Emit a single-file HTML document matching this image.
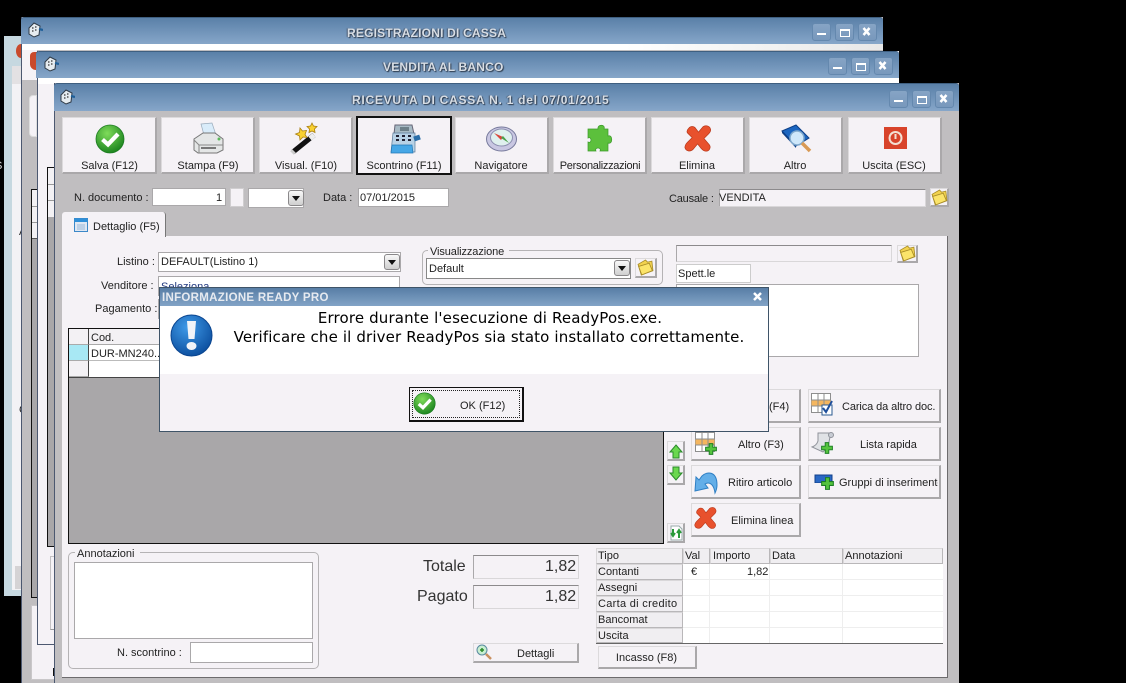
<!DOCTYPE html>
<html><head><meta charset="utf-8"><style>
html,body{margin:0;padding:0;background:#000;width:1126px;height:683px;overflow:hidden}
#r{position:relative;width:1126px;height:683px;overflow:hidden;font:11px "Liberation Sans",sans-serif;color:#222}
#r div,#r svg{position:absolute}
.t{white-space:nowrap;line-height:14px;margin-top:1px}
.tb{background:linear-gradient(#5a80a8,#86a6c9);border-top:1px solid #3f5f80;box-sizing:border-box;border-radius:3px 3px 0 0}
.tt{white-space:nowrap;font-weight:bold;font-size:12px;color:#d8dee5;text-shadow:1px 1px 1px #2c3a4c,-1px 0 1px #4a5a70;line-height:14px}
.wb{width:19px;height:18px;box-sizing:border-box;border:1px solid #6488ae;border-radius:3px;background:linear-gradient(#86a4c5,#7898bc)}
.btn{box-sizing:border-box;background:#f5f2f6;border:1px solid #dcdadc;border-right:2px solid #aaa8aa;border-bottom:2px solid #aaa8aa;box-shadow:none}
.foc{border:2px solid #111;box-shadow:none}
.inp{box-sizing:border-box;background:#fff;border:1px solid #aaa8aa}
.dis{box-sizing:border-box;background:#f5f2f6;border:1px solid #aaa8aa;border-top-color:#8c8a8c;border-bottom-color:#d9d7d9;border-right-color:#d9d7d9}
.arr{width:16px;height:16px;box-sizing:border-box;border:1px solid #8a888a;border-radius:3px;background:linear-gradient(#f8f8f8,#cfcfcf)}
.arr:after{content:"";position:absolute;left:3px;top:5px;border:4px solid transparent;border-top:5px solid #111;border-bottom:0}
.c{text-align:center}
.g{box-sizing:border-box;border:1px solid #b5b3b5;border-radius:5px}
.h{box-sizing:border-box;background:#f0eef1;border:1px solid #d9d7d9;border-right-color:#b9b7b9;border-bottom-color:#b9b7b9}
</style></head><body><div id="r">

<svg width="0" height="0" style="left:0;top:0">
<defs>
<radialGradient id="gg" cx="40%" cy="30%" r="75%"><stop offset="0" stop-color="#7fdc5a"/><stop offset="1" stop-color="#17801c"/></radialGradient>
<radialGradient id="bb" cx="40%" cy="30%" r="75%"><stop offset="0" stop-color="#3f9ae8"/><stop offset="1" stop-color="#0a4c9c"/></radialGradient>
<symbol id="ok" viewBox="0 0 30 30"><circle cx="15" cy="15" r="14" fill="url(#gg)" stroke="#1b7a20" stroke-width=".8"/><path d="M7.5 15.5l5.5 5 10-10.5" fill="none" stroke="#fff" stroke-width="4.2"/></symbol>
<symbol id="x" viewBox="0 0 32 32"><path d="M5 5c2-3 6-3 8 0l3 4 5-6c3-2 7-1 8 2 1 2 0 4-2 6l-5 5 6 7c2 3 0 7-4 7-2 0-3-1-5-3l-4-5-5 6c-3 3-8 2-9-2 0-2 1-4 3-6l5-5-5-5C3 9 3 7 5 5z" fill="#e8512d" stroke="#b93a1d" stroke-width=".8"/></symbol>
<symbol id="fold" viewBox="0 0 16 16"><path d="M1 5l7-4 2 2 4-1 1 9-11 4z" fill="#f2d24e" stroke="#a88c28" stroke-width=".8"/><path d="M1.500 7l10-3 3 7-10 4z" fill="#fbe46a" stroke="#a88c28" stroke-width=".8"/></symbol>
<symbol id="gear" viewBox="0 0 16 16"><path d="M2 6l5-5 6 3-1 9-5 2-5-3z" fill="#e6ecf0" stroke="#2f3a46" stroke-width="1"/><path d="M5 6h1.500M8 5h1.500M5 9h1.500M8 8h1.500" stroke="#333" stroke-width="1.300"/><path d="M12 7l4 1" stroke="#1f5f98" stroke-width="2.200"/></symbol>
<symbol id="grid" viewBox="0 0 20 20"><path d="M.5.5h19v19H.5z" fill="#fff" stroke="#8e8e8e"/><path d="M.5 7h19v6H.5z" fill="#f4b65f"/><path d="M7 .5v19M13 .5v19M.5 7h19M.5 13h19" stroke="#8e8e8e" fill="none"/></symbol>
<symbol id="plus" viewBox="0 0 10 10"><path d="M3.5 .5h3v3h3v3h-3v3h-3v-3h-3v-3h3z" fill="#55c43e" stroke="#1c7d24" stroke-width=".8"/></symbol>
</defs></svg>

<!-- farthest window -->
<div style="left:4px;top:36px;width:18px;height:560px;background:#c6d8e0"></div>
<div style="left:12px;top:66px;width:10px;height:524px;background:#f3f2f5"></div>
<div style="left:12px;top:66px;width:10px;height:18px;background:#e3e1e3"></div>
<div style="left:15px;top:566px;width:7px;height:23px;background:#d5d3d5"></div>
<div class="t" style="left:-5px;top:158px;color:#ddd">S</div>
<div class="t" style="left:19px;top:224px;">A</div>
<div class="t" style="left:19px;top:402px;">C</div>
<svg style="left:15px;top:44px" width="10" height="14"><ellipse cx="6" cy="7" rx="5" ry="7" fill="#c94a2c"/></svg>

<!-- window 1 -->
<div style="left:21px;top:17px;width:862px;height:666px;background:#c0bec0;border-left:1px solid #4c5870;box-sizing:border-box"></div>
<div style="left:22px;top:44px;width:861px;height:6px;background:linear-gradient(90deg,#fff,#fff 70%,#e8e8e8)"></div>
<div style="left:22px;top:50px;width:15px;height:30px;background:#f5f2f6"></div>
<div style="left:29px;top:95px;width:8px;height:42px;background:#f5f2f6;border:1px solid #ddd;border-radius:4px 0 0 4px;box-sizing:border-box"></div>
<div style="left:31px;top:189px;width:6px;height:409px;background:#a9a7a9;border:1px solid #111;border-right:0;box-sizing:border-box"></div>
<div style="left:32px;top:190px;width:5px;height:48px;background:#f3f1f4;border-bottom:1px solid #555"></div>
<div style="left:32px;top:206px;width:5px;height:1px;background:#999"></div>
<div style="left:32px;top:222px;width:5px;height:1px;background:#999"></div>
<div style="left:31px;top:605px;width:24px;height:75px;background:#f5f2f6;border:1px solid #c9c7c9;box-sizing:border-box"></div>
<div style="left:53px;top:668px;width:2px;height:8px;background:#111"></div>
<div class="tb" style="left:21px;top:17px;width:862px;height:27px"></div>
<div class="tt" style="left:347px;top:26px;letter-spacing:.2px">REGISTRAZIONI DI CASSA</div>
<svg style="left:27px;top:22px" width="16" height="16"><use href="#gear"/></svg>
<div class="wb" style="left:812px;top:23px"></div><div class="wb" style="left:835px;top:23px"></div><div class="wb" style="left:858px;top:23px"></div>
<svg style="left:812px;top:23px" width="65" height="18" fill="none" stroke="#fff"><path d="M5 11h9" stroke-width="2"/><path d="M28.500 6.500h9v7h-9z M28 7.500h10" stroke-width="1"/><path d="M51.500 5l6 7M57.500 5l-6 7" stroke-width="2.500"/></svg>

<!-- window 2 -->
<div style="left:37px;top:51px;width:862px;height:594px;background:#f5f2f6;border-left:1px solid #4c5870;border-bottom:1px solid #4c5870;box-sizing:border-box"></div>
<div style="left:38px;top:78px;width:861px;height:6px;background:#fff"></div>
<div style="left:47px;top:167px;width:8px;height:380px;background:#a9a7a9;border:1px solid #111;border-right:0;box-sizing:border-box"></div>
<div style="left:48px;top:168px;width:7px;height:49px;background:#f3f1f4"></div>
<div style="left:48px;top:184px;width:7px;height:1px;background:#999"></div>
<div style="left:48px;top:200px;width:7px;height:1px;background:#999"></div>
<div style="left:50px;top:556px;width:5px;height:74px;background:#f5f2f6;border:1px solid #c4c2c4;border-bottom-color:#999;box-sizing:border-box"></div>
<div style="left:30px;top:52px;width:7px;height:18px;background:#c94a2c;border-radius:4px 0 0 6px"></div>
<div class="tb" style="left:36px;top:51px;width:863px;height:27px"></div>
<div class="tt" style="left:383px;top:60px;letter-spacing:.2px">VENDITA AL BANCO</div>
<svg style="left:43px;top:56px" width="16" height="16"><use href="#gear"/></svg>
<div class="wb" style="left:828px;top:57px"></div><div class="wb" style="left:851px;top:57px"></div><div class="wb" style="left:874px;top:57px"></div>
<svg style="left:828px;top:57px" width="65" height="18" fill="none" stroke="#fff"><path d="M5 11h9" stroke-width="2"/><path d="M28.500 6.500h9v7h-9z M28 7.500h10" stroke-width="1"/><path d="M51.500 5l6 7M57.500 5l-6 7" stroke-width="2.500"/></svg>

<!-- window 3 -->
<div style="left:54px;top:83px;width:905px;height:600px;background:#c0bec0;border-left:1px solid #4c5870;box-sizing:border-box"></div>
<div class="tb" style="left:54px;top:83px;width:905px;height:28px"></div>
<div class="tt" style="left:352px;top:93px;letter-spacing:.75px">RICEVUTA DI CASSA N. 1 del 07/01/2015</div>
<svg style="left:59px;top:89px" width="16" height="16"><use href="#gear"/></svg>
<div class="wb" style="left:889px;top:90px"></div><div class="wb" style="left:912px;top:90px"></div><div class="wb" style="left:935px;top:90px"></div>
<svg style="left:889px;top:90px" width="65" height="18" fill="none" stroke="#fff"><path d="M5 11h9" stroke-width="2"/><path d="M28.500 6.500h9v7h-9z M28 7.500h10" stroke-width="1"/><path d="M51.500 5l6 7M57.500 5l-6 7" stroke-width="2.500"/></svg>

<!-- toolbar -->
<div class="btn" style="left:62px;top:117px;width:95px;height:57px"></div>
<div class="btn" style="left:161px;top:117px;width:94px;height:57px"></div>
<div class="btn" style="left:259px;top:117px;width:94px;height:57px"></div>
<div class="btn foc" style="left:356px;top:116px;width:96px;height:59px"></div>
<div class="btn" style="left:455px;top:117px;width:94px;height:57px"></div>
<div class="btn" style="left:553px;top:117px;width:94px;height:57px"></div>
<div class="btn" style="left:651px;top:117px;width:94px;height:57px"></div>
<div class="btn" style="left:749px;top:117px;width:94px;height:57px"></div>
<div class="btn" style="left:848px;top:117px;width:94px;height:57px"></div>
<div class="t c" style="left:62px;top:158px;width:95px">Salva (F12)</div>
<div class="t c" style="left:161px;top:158px;width:94px">Stampa (F9)</div>
<div class="t c" style="left:259px;top:158px;width:94px">Visual. (F10)</div>
<div class="t c" style="left:356px;top:158px;width:96px">Scontrino (F11)</div>
<div class="t c" style="left:455px;top:158px;width:92px">Navigatore</div>
<div class="t c" style="left:553px;top:158px;width:94px;letter-spacing:-.3px">Personalizzazioni</div>
<div class="t c" style="left:651px;top:158px;width:92px">Elimina</div>
<div class="t c" style="left:749px;top:158px;width:92px">Altro</div>
<div class="t c" style="left:848px;top:158px;width:92px">Uscita (ESC)</div>

<svg style="left:95px;top:124px" width="30" height="30"><use href="#ok"/></svg>
<svg style="left:192px;top:122px" width="32" height="33"><path d="M9 2l11-1 4 12H12z" fill="#d9ecfa" stroke="#9ab" stroke-width=".7"/><path d="M2 17l9-6h12l8 6v11l-6 3H6l-4-3z" fill="#e4e6e6" stroke="#777"/><path d="M2 18l5 5h24M7 23v8" stroke="#888" fill="none"/><path d="M9 26h15" stroke="#777" stroke-width="2"/><circle cx="27" cy="17" r="1.500" fill="#5cb85c"/></svg>
<svg style="left:290px;top:122px" width="32" height="33"><path d="M3 30L24 13" stroke="#111" stroke-width="5"/><path d="M20 16.500l4-3.500" stroke="#eee" stroke-width="5"/><path d="M2 31l2-2" stroke="#ccc" stroke-width="5"/><path d="M10 6l2.500 3 4-.5-1.500 4 2 3-4-.5-3 3-.5-4-4-2 4-1.500z" fill="#f9d132" stroke="#a87e10" stroke-width=".8"/><path d="M22 1l1.500 3 3.500.5-2.500 2.500.5 3.500-3-1.500-3 1.500.5-3.500L17 4.500l3.500-.5z" fill="#f9d132" stroke="#a87e10" stroke-width=".8"/></svg>
<svg style="left:388px;top:122px" width="33" height="33"><path d="M7 3h17l2 9H6z" fill="#a7bac4" stroke="#667"/><path d="M12 5h9v4h-9z" fill="#6c7f88"/><path d="M5 11h22v19H3z" fill="#b8d2e6" stroke="#5a7a98" stroke-width=".7"/><path d="M8 14h3M14 14h3M20 14h3M8 18h3M14 18h3M20 18h3" stroke="#223" stroke-width="2"/><path d="M4 23h20l1 8H3z" fill="#46a7e6" stroke="#2378b5" stroke-width=".7"/><path d="M26 17l6-2" stroke="#2a6ea8" stroke-width="5"/></svg>
<svg style="left:486px;top:126px" width="31" height="26"><ellipse cx="15.500" cy="13" rx="15" ry="12" fill="#c9c7e2" stroke="#777a9c"/><ellipse cx="15.500" cy="11.500" rx="11" ry="8.500" fill="#dff0ee" stroke="#8d8fb0"/><path d="M8 7l9 4-2 3z" fill="#d9463a"/><path d="M23 17l-8-5 2-2z" fill="#4aa04a"/></svg>
<svg style="left:587px;top:124px" width="28" height="29"><path d="M8 5h3c-1-5 8-5 6 0h4v7c5-2 5 9 0 7v8H13c2-4-6-4-4 0H1v-9c4 2 4-6 0-4V5z" fill="#5cc03c" stroke="#3b9a2a" stroke-width=".7"/></svg>
<svg style="left:684px;top:124px" width="29" height="29"><use href="#x"/></svg>
<svg style="left:781px;top:124px" width="31" height="30"><path d="M1 7L15 1l13 13-13 8z" fill="#1c66c0" stroke="#0d3f86"/><path d="M1 7l14 15v2L1 9z" fill="#0d3f86"/><circle cx="16" cy="14" r="7" fill="#cfe8fa" stroke="#7fa8cc" stroke-width="1.500"/><path d="M21 19l8 8" stroke="#d89a55" stroke-width="3.500"/></svg>
<svg style="left:884px;top:127px" width="23" height="22"><path d="M0 0h23v22H0z" fill="#d8432a"/><circle cx="11.500" cy="11" r="6" fill="none" stroke="#f3dfd3" stroke-width="2"/><path d="M11.500 7v5" stroke="#f3dfd3" stroke-width="2"/></svg>

<!-- doc row -->
<div class="t" style="left:74px;top:190px">N. documento :</div>
<div class="inp" style="left:152px;top:188px;width:74px;height:18px"></div>
<div class="t" style="left:216px;top:190px">1</div>
<div class="dis" style="left:230px;top:188px;width:14px;height:19px;border-color:#d0ced0"></div>
<div class="inp" style="left:248px;top:188px;width:56px;height:20px"></div>
<div class="arr" style="left:288px;top:190px"></div>
<div class="t" style="left:323px;top:190px">Data :</div>
<div class="inp" style="left:358px;top:188px;width:91px;height:19px"></div>
<div class="t" style="left:360px;top:190px">07/01/2015</div>
<div class="t" style="left:669px;top:191px;letter-spacing:-.2px">Causale :</div>
<div class="dis" style="left:719px;top:189px;width:207px;height:18px"></div>
<div class="t" style="left:719px;top:190px">VENDITA</div>
<div class="btn" style="left:930px;top:188px;width:19px;height:19px"></div>
<svg style="left:931px;top:189px" width="17" height="17"><use href="#fold"/></svg>

<!-- panel -->
<div style="left:62px;top:236px;width:886px;height:442px;background:#f5f2f6;border-bottom:1px solid #6d6b6d;border-right:1px solid #6d6b6d;box-sizing:border-box"></div>
<div style="left:62px;top:212px;width:104px;height:25px;background:#f5f2f6;border-radius:3px 3px 0 0;border-right:1px solid #777;box-sizing:border-box"></div>
<svg style="left:74px;top:218px" width="14" height="14"><path d="M.5.5h13v13H.5z" fill="#dfe7f2" stroke="#3b88c8"/><path d="M.5.500h13v3.500H.5z" fill="#2f8fd8"/><path d="M3 6h8v6H3z" fill="#bcd0e6"/></svg>
<div class="t" style="left:93px;top:219px">Dettaglio (F5)</div>

<div class="t" style="left:117px;top:254px">Listino :</div>
<div class="inp" style="left:158px;top:252px;width:243px;height:20px"></div>
<div class="t" style="left:161px;top:254px">DEFAULT(Listino 1)</div>
<div class="arr" style="left:384px;top:254px"></div>
<div class="t" style="left:101px;top:278px">Venditore :</div>
<div class="inp" style="left:158px;top:276px;width:242px;height:20px"></div>
<div class="t" style="left:161px;top:279px;color:#223a80">Seleziona</div>
<div class="t" style="left:95px;top:301px">Pagamento :</div>
<div class="inp" style="left:158px;top:299px;width:20px;height:20px"></div>

<div class="g" style="left:422px;top:250px;width:241px;height:35px"></div>
<div class="t" style="left:428px;top:244px;background:#f5f2f6;padding:0 5px 0 2px;letter-spacing:-.1px">Visualizzazione</div>
<div class="inp" style="left:426px;top:258px;width:205px;height:21px;border-color:#888"></div>
<div class="t" style="left:429px;top:261px">Default</div>
<div class="arr" style="left:614px;top:260px"></div>
<div class="btn" style="left:635px;top:258px;width:22px;height:20px"></div>
<svg style="left:637px;top:259px" width="17" height="17"><use href="#fold"/></svg>

<div class="dis" style="left:676px;top:245px;width:216px;height:17px"></div>
<div class="btn" style="left:897px;top:245px;width:21px;height:18px"></div>
<svg style="left:899px;top:245px" width="17" height="17"><use href="#fold"/></svg>
<div class="inp" style="left:676px;top:264px;width:75px;height:19px;border-color:#ccc"></div>
<div class="t" style="left:678px;top:266px">Spett.le</div>
<div class="inp" style="left:676px;top:284px;width:243px;height:73px"></div>

<!-- grid -->
<div style="left:68px;top:328px;width:596px;height:216px;background:#a9a7a9;border:1px solid #111;box-sizing:border-box"></div>
<div style="left:69px;top:329px;width:20px;height:16px;background:#f3f1f4;border-right:1px solid #444;border-bottom:1px solid #aaa;box-sizing:border-box"></div>
<div style="left:69px;top:345px;width:20px;height:16px;background:#a8e8f4;border-right:1px solid #444;border-bottom:1px solid #aaa;box-sizing:border-box"></div>
<div style="left:69px;top:361px;width:20px;height:16px;background:#f3f1f4;border-right:1px solid #444;border-bottom:1px solid #aaa;box-sizing:border-box"></div>
<div style="left:89px;top:329px;width:80px;height:16px;background:#f3f1f4;border-bottom:1px solid #aaa;box-sizing:border-box"></div>
<div style="left:89px;top:345px;width:80px;height:32px;background:#fff"></div>
<div style="left:89px;top:360px;width:80px;height:1px;background:#bbb"></div>
<div style="left:69px;top:377px;width:100px;height:1px;background:#444"></div>
<div class="t" style="left:91px;top:330px">Cod.</div>
<div class="t" style="left:91px;top:346px">DUR-MN240..</div>

<!-- right buttons -->
<div class="btn" style="left:691px;top:389px;width:110px;height:34px"></div>
<div class="btn" style="left:808px;top:389px;width:133px;height:34px"></div>
<div class="btn" style="left:691px;top:427px;width:110px;height:34px"></div>
<div class="btn" style="left:808px;top:427px;width:133px;height:34px"></div>
<div class="btn" style="left:691px;top:465px;width:110px;height:34px"></div>
<div class="btn" style="left:808px;top:465px;width:133px;height:34px"></div>
<div class="btn" style="left:691px;top:503px;width:110px;height:34px"></div>
<div class="t" style="left:769px;top:399px">(F4)</div>
<div class="t" style="left:842px;top:399px;letter-spacing:-.1px">Carica da altro doc.</div>
<div class="t" style="left:738px;top:437px">Altro (F3)</div>
<div class="t" style="left:860px;top:437px">Lista rapida</div>
<div class="t" style="left:728px;top:475px">Ritiro articolo</div>
<div class="t" style="left:839px;top:475px;width:99px;overflow:hidden">Gruppi di inserimento</div>
<div class="t" style="left:731px;top:513px">Elimina linea</div>

<svg style="left:811px;top:393px" width="20" height="20"><use href="#grid"/></svg>
<svg style="left:821px;top:400px" width="13" height="16"><path d="M1 5h10v10H1z" fill="#fff" stroke="#2a5a90"/><path d="M2 8l3 4 6-11" fill="none" stroke="#1f4f9c" stroke-width="2"/></svg>
<svg style="left:695px;top:432px" width="20" height="20"><use href="#grid"/></svg>
<svg style="left:705px;top:443px" width="12" height="12"><use href="#plus"/></svg>
<svg style="left:810px;top:431px" width="28" height="26"><path d="M8 2h12c3 0 3 4 0 4l-2 10c-1 3-4 3-5 5L2 16c3-1 5-3 6-6z" fill="#e0e2e6" stroke="#8f929a"/><circle cx="21" cy="4" r="2.500" fill="#c8ccd4" stroke="#8f929a"/></svg>
<svg style="left:821px;top:442px" width="12" height="12"><use href="#plus"/></svg>
<svg style="left:693px;top:470px" width="25" height="25"><path d="M9 6c5-5 15-5 15 9 0 4-1 6-2 8-1-8-5-12-10-9l3 4-13 3 1-14 3 3z" fill="#63aee8" stroke="#2f7fc4"/></svg>
<svg style="left:814px;top:474px" width="19" height="9"><path d="M1 1h17v8H1z" fill="#2a68c4" stroke="#12408a"/></svg>
<svg style="left:821px;top:477px" width="13" height="13"><use href="#plus"/></svg>
<svg style="left:694px;top:506px" width="24" height="24"><use href="#x"/></svg>

<div class="btn" style="left:667px;top:441px;width:18px;height:20px"></div>
<svg style="left:669px;top:444px" width="14" height="15"><path d="M7 1l6 7H10v6H4V8H1z" fill="#6ad84e" stroke="#2a8a2a"/></svg>
<div class="btn" style="left:667px;top:465px;width:18px;height:20px"></div>
<svg style="left:669px;top:466px" width="14" height="15"><path d="M7 14L1 7h3V1h6v6h3z" fill="#6ad84e" stroke="#2a8a2a"/></svg>
<div class="btn" style="left:667px;top:523px;width:18px;height:20px"></div>
<svg style="left:669px;top:525px" width="15" height="16"><path d="M2 1h8l3 3v11H2z" fill="#fff" stroke="#9aa"/><path d="M4 4v7M2 8l2 3 2-3M10 13V6M8 8l2-3 2 3" stroke="#2a9a3a" stroke-width="2" fill="none"/></svg>

<!-- annotations -->
<div class="g" style="left:68px;top:552px;width:251px;height:117px"></div>
<div class="t" style="left:75px;top:546px;background:#f5f2f6;padding:0 5px 0 2px;">Annotazioni</div>
<div class="inp" style="left:74px;top:562px;width:239px;height:77px"></div>
<div class="t" style="left:117px;top:645px">N. scontrino :</div>
<div class="inp" style="left:190px;top:642px;width:123px;height:21px"></div>

<!-- totals -->
<div class="t" style="left:423px;top:558px;font-size:16px;line-height:16px;color:#333">Totale</div>
<div class="dis" style="left:473px;top:555px;width:106px;height:24px"></div>
<div class="t" style="left:545px;top:558px;font-size:16px;line-height:16px;color:#333">1,82</div>
<div class="t" style="left:417px;top:588px;font-size:16px;line-height:16px;color:#333">Pagato</div>
<div class="dis" style="left:473px;top:585px;width:106px;height:24px"></div>
<div class="t" style="left:545px;top:588px;font-size:16px;line-height:16px;color:#333">1,82</div>
<div class="btn" style="left:473px;top:643px;width:106px;height:20px"></div>
<svg style="left:476px;top:644px" width="16" height="17"><circle cx="6" cy="6" r="5" fill="#c8eed0" stroke="#5a8aa0"/><path d="M4 6h4M6 4v4" stroke="#2a8a2a" stroke-width="1.500"/><path d="M10 10l5 5" stroke="#c99060" stroke-width="2.500"/></svg>
<div class="t" style="left:517px;top:646px">Dettagli</div>

<!-- payments table -->
<div style="left:596px;top:548px;width:347px;height:96px;background:#fff;border-bottom:1px solid #666;box-sizing:border-box"></div>
<div class="h" style="left:596px;top:548px;width:87px;height:16px"></div>
<div class="h" style="left:683px;top:548px;width:27px;height:16px"></div>
<div class="h" style="left:710px;top:548px;width:60px;height:16px"></div>
<div class="h" style="left:770px;top:548px;width:73px;height:16px"></div>
<div class="h" style="left:843px;top:548px;width:100px;height:16px"></div>
<div class="h" style="left:596px;top:564px;width:87px;height:16px"></div>
<div class="h" style="left:596px;top:580px;width:87px;height:16px"></div>
<div class="h" style="left:596px;top:596px;width:87px;height:16px"></div>
<div class="h" style="left:596px;top:612px;width:87px;height:16px"></div>
<div class="h" style="left:596px;top:628px;width:87px;height:15px"></div>
<div style="left:683px;top:579px;width:260px;height:1px;background:#eee"></div>
<div style="left:683px;top:595px;width:260px;height:1px;background:#eee"></div>
<div style="left:683px;top:611px;width:260px;height:1px;background:#eee"></div>
<div style="left:683px;top:627px;width:260px;height:1px;background:#eee"></div>
<div style="left:709px;top:564px;width:1px;height:79px;background:#eee"></div>
<div style="left:769px;top:564px;width:1px;height:79px;background:#eee"></div>
<div style="left:842px;top:564px;width:1px;height:79px;background:#eee"></div>
<div class="t" style="left:598px;top:548px">Tipo</div>
<div class="t" style="left:685px;top:548px">Val</div>
<div class="t" style="left:713px;top:548px">Importo</div>
<div class="t" style="left:772px;top:548px">Data</div>
<div class="t" style="left:845px;top:548px">Annotazioni</div>
<div class="t" style="left:598px;top:564px">Contanti</div>
<div class="t" style="left:598px;top:580px">Assegni</div>
<div class="t" style="left:598px;top:596px;letter-spacing:.3px">Carta di credito</div>
<div class="t" style="left:598px;top:612px">Bancomat</div>
<div class="t" style="left:598px;top:628px">Uscita</div>
<div class="t" style="left:691px;top:564px">€</div>
<div class="t" style="left:747px;top:564px">1,82</div>
<div class="btn" style="left:598px;top:646px;width:99px;height:23px"></div>
<div class="t c" style="left:598px;top:650px;width:97px">Incasso (F8)</div>

<!-- dialog -->
<div style="left:159px;top:287px;width:610px;height:145px;background:#f5f2f6;border:1px solid #3f5468;box-sizing:border-box"></div>
<div style="left:160px;top:306px;width:608px;height:68px;background:#fff"></div>
<div style="left:160px;top:288px;width:608px;height:18px;background:linear-gradient(#587ea6,#82a3c6)"></div>
<div class="t" style="left:162px;top:290px;font-weight:bold;font-size:11.500px;color:#e6eaf0;letter-spacing:.3px">INFORMAZIONE READY PRO</div>
<svg style="left:752px;top:291px" width="11" height="11"><path d="M2 2l7 7M9 2l-7 7" stroke="#fff" stroke-width="2.500"/></svg>
<svg style="left:170px;top:314px" width="43" height="43"><circle cx="21.500" cy="21.500" r="20.500" fill="url(#bb)" stroke="#0a4590"/><path d="M17 7h9l-1.500 18h-6z" fill="#f2f4f8"/><ellipse cx="21.500" cy="32" rx="5" ry="4" fill="#f2f4f8"/></svg>
<div class="t c" style="left:160px;top:311px;width:660px;margin-top:0;font:15px/14px 'DejaVu Sans',sans-serif;color:#000;letter-spacing:.15px">Errore durante l'esecuzione di ReadyPos.exe.</div>
<div class="t c" style="left:159px;top:330px;width:660px;margin-top:0;font:15px/14px 'DejaVu Sans',sans-serif;color:#000;letter-spacing:.14px">Verificare che il driver ReadyPos sia stato installato correttamente.</div>
<div style="left:409px;top:387px;width:115px;height:35px;box-sizing:border-box;border:1px solid #111;border-right-width:2px;border-bottom-width:2px;background:#f5f2f6"></div>
<div style="left:412px;top:390px;width:108px;height:28px;box-sizing:border-box;border:1px dotted #222"></div>
<svg style="left:413px;top:392px" width="23" height="23"><use href="#ok"/></svg>
<div class="t" style="left:460px;top:398px;">OK (F12)</div>

</div></body></html>
